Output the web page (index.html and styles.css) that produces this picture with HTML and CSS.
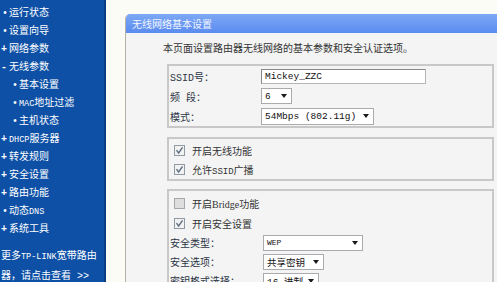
FILE: index.html
```html
<!DOCTYPE html>
<html lang="zh">
<head>
  <meta charset="UTF-8">
  <title>无线网络基本设置</title>
  <link rel="stylesheet" href="styles.css">
</head>
<body>
<div class="page">
  <div class="sidebar">
    <ul class="menu">
      <li class="item dot">运行状态</li>
      <li class="item dot">设置向导</li>
      <li class="item plus">网络参数</li>
      <li class="item minus">无线参数</li>
      <li class="item sub">基本设置</li>
      <li class="item sub"><span class="en">MAC</span>地址过滤</li>
      <li class="item sub">主机状态</li>
      <li class="item plus"><span class="en">DHCP</span>服务器</li>
      <li class="item plus">转发规则</li>
      <li class="item plus">安全设置</li>
      <li class="item plus">路由功能</li>
      <li class="item dot">动态<span class="en">DNS</span></li>
      <li class="item plus">系统工具</li>
    </ul>
    <p class="more">更多<span class="en">TP-LINK</span>宽带路由<br>器，请点击查看 &gt;&gt;</p>
  </div>

  <div class="main">
    <div class="panel">
      <div class="panel-title">无线网络基本设置</div>
      <p class="desc">本页面设置路由器无线网络的基本参数和安全认证选项。</p>

      <!-- 基本参数 -->
      <div class="group g1">
        <div class="row">
          <span class="label">SSID号：</span>
          <div class="input">Mickey_ZZC</div>
        </div>
        <div class="row">
          <span class="label">频&nbsp;段：</span>
          <div class="select w-freq"><span>6</span><i class="arrow"></i></div>
        </div>
        <div class="row">
          <span class="label">模式：</span>
          <div class="select w-mode"><span>54Mbps (802.11g)</span><i class="arrow"></i></div>
        </div>
      </div>

      <!-- 无线开关 -->
      <div class="group g2">
        <div class="row check">
          <svg class="box" width="11" height="11" viewBox="0 0 11 11"><rect x="0.5" y="0.5" width="10" height="10" fill="#f2f2f2" stroke="#8f9aa5"/><path d="M2.5 5.2 L4.6 8 L8.6 2.4" fill="none" stroke="#5f6f82" stroke-width="1.4"/></svg>
          <span>开启无线功能</span>
        </div>
        <div class="row check">
          <svg class="box" width="11" height="11" viewBox="0 0 11 11"><rect x="0.5" y="0.5" width="10" height="10" fill="#f2f2f2" stroke="#8f9aa5"/><path d="M2.5 5.2 L4.6 8 L8.6 2.4" fill="none" stroke="#5f6f82" stroke-width="1.4"/></svg>
          <span>允许<span class="en">SSID</span>广播</span>
        </div>
      </div>

      <!-- 安全设置 -->
      <div class="group g3">
        <div class="row check">
          <svg class="box" width="11" height="11" viewBox="0 0 11 11"><rect x="0.5" y="0.5" width="10" height="10" fill="#dedede" stroke="#a3a8ad"/></svg>
          <span>开启<span class="serif">Bridge</span>功能</span>
        </div>
        <div class="row check">
          <svg class="box" width="11" height="11" viewBox="0 0 11 11"><rect x="0.5" y="0.5" width="10" height="10" fill="#f2f2f2" stroke="#8f9aa5"/><path d="M2.5 5.2 L4.6 8 L8.6 2.4" fill="none" stroke="#5f6f82" stroke-width="1.4"/></svg>
          <span>开启安全设置</span>
        </div>
        <div class="row field">
          <span class="label">安全类型：</span>
          <div class="select w-type"><span class="small">WEP</span><i class="arrow"></i></div>
        </div>
        <div class="row field">
          <span class="label">安全选项：</span>
          <div class="select w-opt"><span>共享密钥</span><i class="arrow"></i></div>
        </div>
        <div class="row field">
          <span class="label">密钥格式选择：</span>
          <div class="select w-fmt"><span>16 进制</span><i class="arrow"></i></div>
        </div>
      </div>
    </div>
  </div>
</div>
</body>
</html>
```

FILE: styles.css
```css
body {
    margin: 0;
    font-family: "Liberation Mono", "Noto Sans CJK SC", monospace;
    font-size: 10px;
}

.page {
    display: flex;
    width: 497px;
    height: 282px;
    overflow: hidden;
}

/** 左侧菜单 **/
.sidebar {
    width: 104px;
    flex-shrink: 0;
    background: #0d50a6;
    border-right: 2px solid #0a3d82;
    color: #fff;
}
.menu {
    list-style: none;
    margin: 0;
    padding: 5px 0 0 0;
}
.item {
    height: 18px;
    line-height: 18px;
    padding-left: 9px;
    position: relative;
}
.item::before {
    position: absolute;
    left: 2px;
    top: 0;
}
.dot::before { content: "•"; }
.plus::before { content: "+"; font-weight: bold; left: 1px; }
.minus::before { content: "-"; font-weight: bold; left: 1px; }
.sub { padding-left: 19px; }
.sub::before { content: "•"; left: 12px; }

.en {
    font-family: "Liberation Mono", monospace;
    font-size: 9px;
}
.sidebar .en { font-size: 8.5px; }

.more {
    margin: 8px 0 0 0;
    padding-left: 1px;
    line-height: 20px;
    white-space: nowrap;
}

/** 右侧内容 **/
.main {
    flex: 1;
    background: #fcfcf6;
    padding: 14px 0 0 19px;
}
.panel {
    height: 100%;
    background: #f4f4f4;
    border-left: 1px solid #b8b2a6;
    border-top-left-radius: 5px;
    overflow: hidden;
}
.panel-title {
    height: 19px;
    line-height: 19px;
    padding-left: 6px;
    background: linear-gradient(#7ea8f5, #5a8cf0);
    color: #f2f6ff;
    font-family: "Noto Sans CJK SC", sans-serif;
}
.desc {
    margin: 8px 0 0 37px;
    line-height: 14px;
    color: #333;
    font-family: "Noto Sans CJK SC", sans-serif;
}

.group {
    margin: 9px 3px 0 41px;
    border: 2px solid #c8c8c8;
    color: #2c3446;
}
.g2 { padding-top: 2px; }
.g3 { margin-top: 8px; padding-top: 2px; }

.row {
    display: flex;
    align-items: center;
    height: 20px;
    padding-left: 1px;
}
.g2 .row { height: 19px; }
.row.field { height: 19px; }
.row.check { padding-left: 5px; color: #333; }
.box { margin-right: 7px; flex-shrink: 0; }

.label {
    width: 91px;
    flex-shrink: 0;
}
.serif {
    font-family: "Liberation Serif", serif;
}

.input {
    box-sizing: border-box;
    width: 165px;
    height: 15px;
    line-height: 13px;
    padding-left: 3px;
    background: #fff;
    border: 1px solid #888;
    border-right-color: #b5b5b5;
    border-bottom-color: #b5b5b5;
    font-size: 9.5px;
    color: #111;
}

.select {
    box-sizing: border-box;
    display: flex;
    align-items: center;
    justify-content: space-between;
    height: 16px;
    padding: 0 4px 0 3px;
    background: #fff;
    border: 1px solid #a9abae;
    font-size: 9.5px;
    color: #111;
}
.g3 .select { margin-left: 2px; }
.arrow {
    width: 0;
    height: 0;
    border-left: 3px solid transparent;
    border-right: 3px solid transparent;
    border-top: 4px solid #1a1a1a;
}
.small { font-size: 8px; }
.w-freq { width: 31px; }
.w-mode { width: 113px; height: 17px; }
.w-type { width: 100px; }
.w-opt { width: 61px; }
.w-fmt { width: 56px; }
```
